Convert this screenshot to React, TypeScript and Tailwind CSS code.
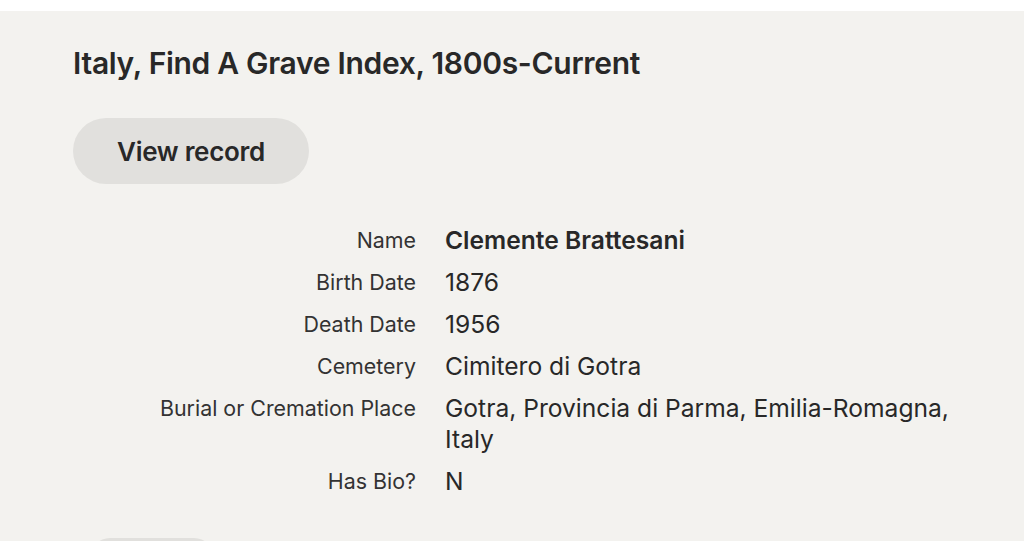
import React from 'react';

interface Field {
    label: string;
    value: string;
    bold?: boolean;
}

const fields: Field[] = [
    { label: 'Name', value: 'Clemente Brattesani', bold: true },
    { label: 'Birth Date', value: '1876' },
    { label: 'Death Date', value: '1956' },
    { label: 'Cemetery', value: 'Cimitero di Gotra' },
    { label: 'Burial or Cremation Place', value: 'Gotra, Provincia di Parma, Emilia-Romagna, Italy' },
    { label: 'Has Bio?', value: 'N' },
];

const App: React.FC = () => {
    return (
        <div className="min-h-[541px] bg-white pt-[11px] overflow-hidden" style={{ fontFamily: 'Inter, "Liberation Sans", sans-serif' }}>
            <div className="bg-[#f3f2ef] h-[530px] px-[73px] pt-[34px] text-[#282828] overflow-hidden">
                {/* titre de la collection */}
                <h1 className="text-[30px] leading-[36px] font-semibold tracking-[-0.3px]">
                    Italy, Find A Grave Index, 1800s-Current
                </h1>
                <button type="button" className="mt-[37px] w-[236px] h-[66px] rounded-full bg-[#e1e0dd] text-[26px] font-semibold tracking-[-0.3px]">
                    View record
                </button>
                {/* détails de l'enregistrement */}
                <div className="mt-[41px] grid grid-cols-[343px_1fr] gap-x-[29px] gap-y-[11px]">
                    {fields.map((f, i) => (
                        <React.Fragment key={i}>
                            <div className="text-right text-[21.4px] leading-[31px] text-[#333]">{f.label}</div>
                            <div className={`text-[24.6px] leading-[31px] max-w-[520px] ${f.bold ? 'font-semibold' : ''}`}>{f.value}</div>
                        </React.Fragment>
                    ))}
                </div>
                <div className="mt-[41px] ml-[17px] w-[124px] h-[40px] rounded-full bg-[#e1e0dd]" />
            </div>
        </div>
    );
};

export default App;
